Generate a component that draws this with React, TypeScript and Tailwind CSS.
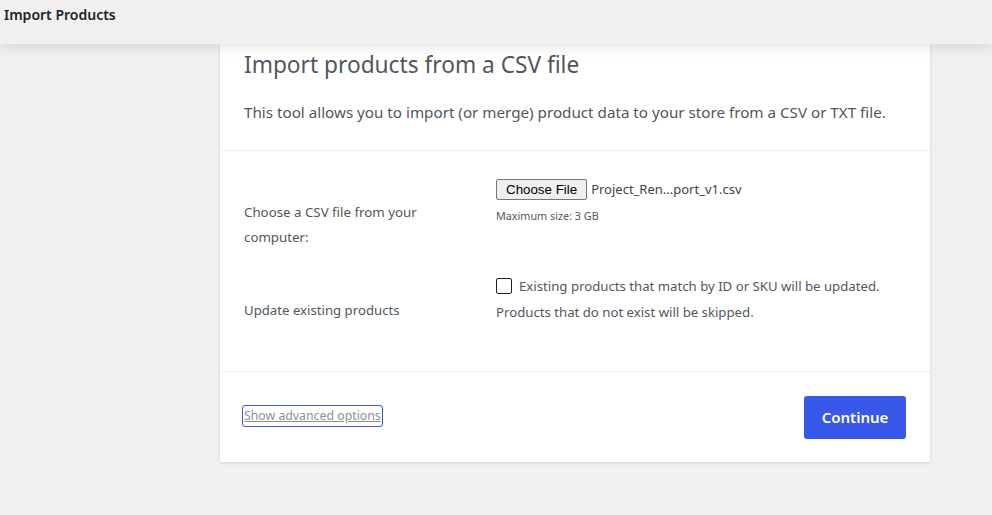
import React from "react"

const sans = "font-['Segoe_UI','Noto_Sans',sans-serif]"

export default function App() {
  return (
    <div className={`min-h-[515px] bg-[#f0f0f0] ${sans}`}>
      {/* Top bar */}
      <header className="relative z-10 flex h-[44px] items-start bg-[#f0f0f0] px-1 pt-[5px] shadow-[0_2px_14px_rgba(0,0,0,0.13)]">
        <h1 className="text-[14px] font-semibold leading-[20px] text-[#1d2327]">Import Products</h1>
      </header>

      {/* Card */}
      <div className="ml-[220px] w-[710px] bg-white shadow-[0_1px_3px_rgba(0,0,0,0.13)]">
        <div className="border-b border-[#ededed] px-6 pt-[5px] pb-[26px]">
          <h2 className="text-[22.7px] font-normal leading-[32px] text-[#50575e]">
            Import products from a CSV file
          </h2>
          <p className="mt-[19px] text-[15.2px] leading-[24px] text-[#50575e]">
            This tool allows you to import (or merge) product data to your store from a CSV or TXT file.
          </p>
        </div>

        <div className="border-b border-[#ededed] px-6 pb-[46px]">
          {/* Row: file */}
          <div className="flex items-start">
            <div className="w-[252px] pt-[49px] pr-6 text-[13.3px] leading-[25px] text-[#50575e]">
              Choose a CSV file from your computer:
            </div>
            <div className="pt-[28px]">
              <div className="flex items-center">
                <span className="inline-flex h-[21px] items-center rounded-[2px] border border-[#767676] bg-[#efefef] px-[9px] font-['Liberation_Sans',Arial,sans-serif] text-[13.33px] text-black">
                  Choose File
                </span>
                <span className="ml-[4px] text-[13px] text-[#3c434a]">Project_Ren...port_v1.csv</span>
              </div>
              <p className="mt-[8px] text-[10.8px] leading-[16px] text-[#50575e]">Maximum size: 3 GB</p>
            </div>
          </div>

          {/* Row: update */}
          <div className="flex items-start">
            <div className="w-[252px] pt-[47px] pr-6 text-[13.2px] leading-[26px] text-[#50575e]">
              Update existing products
            </div>
            <div className="pt-[23px] text-[13.2px] leading-[26px] text-[#50575e]">
              <label className="flex items-center">
                <span className="mr-[7px] inline-block h-[16px] w-[16px] rounded-[2px] border border-[#1e1e1e] bg-white" />
                Existing products that match by ID or SKU will be updated.
              </label>
              <div>Products that do not exist will be skipped.</div>
            </div>
          </div>
        </div>

        {/* Footer */}
        <div className="flex items-center justify-between px-6 pt-6 pb-[23px]">
          <a
            href="#"
            className="-ml-[1px] -mt-[3px] rounded-[2px] px-[1px] text-[12.3px] leading-[20px] text-[#8c8f94] underline outline outline-[1.5px] outline-[#3858e9]"
          >
            Show advanced options
          </a>
          <button className="h-[43px] w-[102px] rounded-[3px] bg-[#3858e9] text-[15px] font-semibold text-white">
            Continue
          </button>
        </div>
      </div>
    </div>
  )
}
